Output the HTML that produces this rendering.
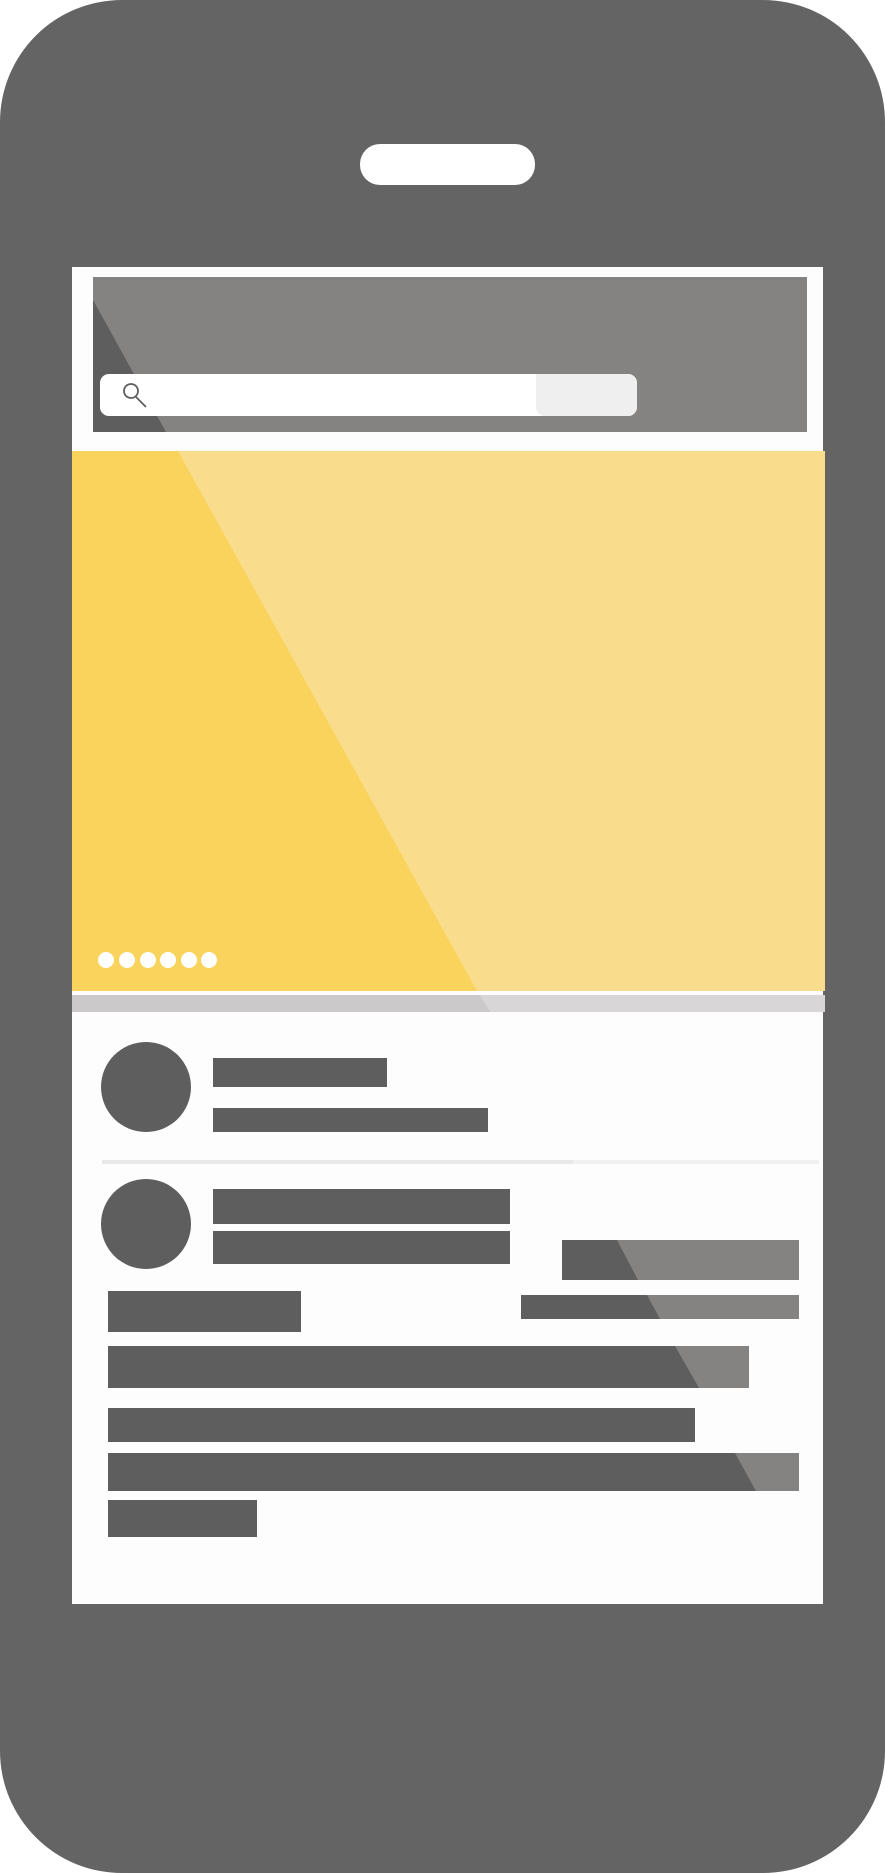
<!DOCTYPE html>
<html><head><style>html,body{margin:0;padding:0;background:#fff}svg{display:block}</style></head>
<body>
<svg width="885" height="1873" viewBox="0 0 885 1873" xmlns="http://www.w3.org/2000/svg">
<rect x="0" y="0" width="885" height="1873" rx="122" ry="122" fill="#646464"/>
<rect x="360" y="144" width="175" height="41" rx="20" fill="#fff"/>
<rect x="72" y="267" width="751" height="1337" fill="#fdfdfd"/>
<rect x="93" y="277" width="714" height="155" fill="#848381"/>
<polygon points="93,300 93,432 166,432" fill="#5e5e5e"/>
<rect x="100" y="374" width="537" height="42" rx="9" fill="#fff"/>
<path d="M536,374 H628 A9,9 0 0 1 637,383 V407 A9,9 0 0 1 628,416 H545 A9,9 0 0 1 536,407 Z" fill="#eeefee"/>
<circle cx="131" cy="391" r="7" fill="none" stroke="#5e5e5e" stroke-width="1.8"/>
<line x1="136" y1="397" x2="146" y2="407" stroke="#5e5e5e" stroke-width="1.8"/>
<rect x="72" y="451" width="753" height="540" fill="#f9dd8c"/>
<polygon points="72,451 178,451 477,991 72,991" fill="#f9d35c"/>
<rect x="72" y="995" width="753" height="17" fill="#d8d6d7"/>
<polygon points="72,995 480,995 490,1012 72,1012" fill="#cbc9ca"/>
<g fill="#fff">
<ellipse cx="106" cy="960" rx="8" ry="8"/><ellipse cx="127" cy="960" rx="8" ry="8"/><ellipse cx="148" cy="960" rx="8" ry="8"/><ellipse cx="168" cy="960" rx="8" ry="8"/><ellipse cx="189" cy="960" rx="8" ry="8"/><ellipse cx="209" cy="960" rx="8" ry="8"/>
</g>
<g fill="#5e5e5e">
<circle cx="146" cy="1087" r="45"/>
<rect x="213" y="1058" width="174" height="29"/>
<rect x="213" y="1108" width="275" height="24"/>
<circle cx="146" cy="1224" r="45"/>
<rect x="213" y="1189" width="297" height="35"/>
<rect x="213" y="1231" width="297" height="33"/>
<rect x="108" y="1291" width="193" height="41"/>
<rect x="108" y="1408" width="587" height="34"/>
<rect x="108" y="1500" width="149" height="37"/>
</g>
<rect x="102" y="1160" width="471" height="4" fill="#e8e8e8"/>
<rect x="573" y="1160" width="246" height="4" fill="#f1f1f1"/>
<rect x="562" y="1240" width="237" height="40" fill="#848381"/>
<polygon points="562,1240 617,1240 638,1280 562,1280" fill="#5e5e5e"/>
<rect x="521" y="1295" width="278" height="24" fill="#848381"/>
<polygon points="521,1295 647,1295 660,1319 521,1319" fill="#5e5e5e"/>
<rect x="108" y="1346" width="641" height="42" fill="#848381"/>
<polygon points="108,1346 675,1346 699,1388 108,1388" fill="#5e5e5e"/>
<rect x="108" y="1453" width="691" height="38" fill="#848381"/>
<polygon points="108,1453 735,1453 756,1491 108,1491" fill="#5e5e5e"/>
</svg>
</body></html>
